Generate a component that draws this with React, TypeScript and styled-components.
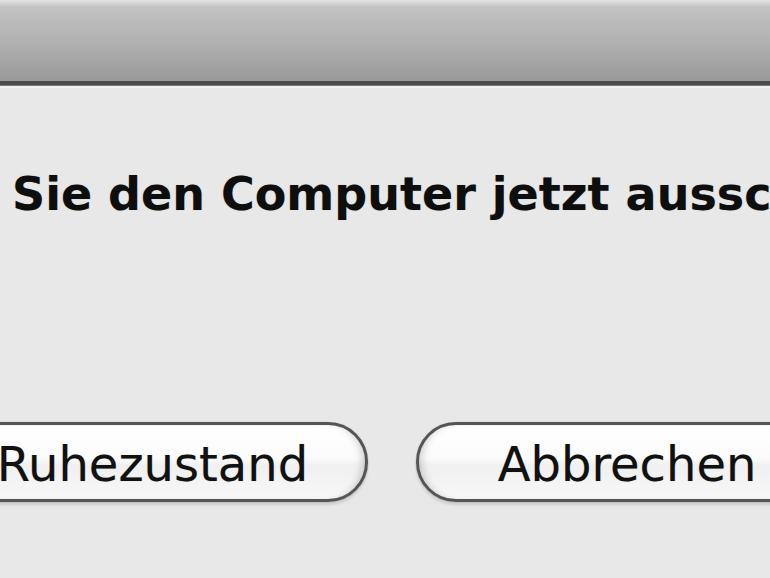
import React from "react";
import styled, { createGlobalStyle } from "styled-components";

const Global = createGlobalStyle`
  html, body { margin: 0; padding: 0; }
  body {
    width: 770px;
    height: 578px;
    overflow: hidden;
    background: #e8e8e8;
    font-family: "DejaVu Sans", "Liberation Sans", sans-serif;
  }
`;

const Window = styled.div`
  width: 770px;
  height: 578px;
  overflow: hidden;
  display: flex;
  flex-direction: column;
  background: #e8e8e8;
`;

const TitleBar = styled.div`
  flex: 0 0 auto;
  height: 81px;
  background: linear-gradient(
    to bottom,
    #e4e4e4 0px,
    #d6d6d6 3px,
    #c2c2c2 7px,
    #b5b5b5 35px,
    #a3a3a3 65px,
    #999999 81px
  );
  border-bottom: 4px solid #4c4c4c;
  box-shadow: 0 1px 0 #7a7a7a, 0 3px 0 #f2f2f2;
`;

const Body = styled.div`
  flex: 1 1 auto;
  display: flex;
  flex-direction: column;
  padding-top: 82px;
  overflow: hidden;
`;

const Message = styled.div`
  font-weight: bold;
  font-size: 46px;
  line-height: 54px;
  color: #0e0e0e;
  white-space: nowrap;
  padding-left: 12px;
  text-shadow: 0 0 1px rgba(0, 0, 0, 0.25);
`;

const ButtonRow = styled.div`
  display: flex;
  gap: 48px;
  margin-top: 201px;
  margin-left: -63px;
`;

const Button = styled.div<{ $width: number }>`
  flex: 0 0 auto;
  box-sizing: border-box;
  width: ${(p) => p.$width}px;
  height: 80px;
  border-radius: 40px;
  border: 3px solid #555555;
  background: linear-gradient(
    to bottom,
    #ffffff 0%,
    #fbfbfb 45%,
    #f0f0f0 55%,
    #f8f8f8 100%
  );
  box-shadow: inset 8px 0 8px -6px rgba(0, 0, 0, 0.2),
    inset -8px 0 8px -6px rgba(0, 0, 0, 0.2),
    0 0 1px rgba(0, 0, 0, 0.4),
    0 3px 3px rgba(0, 0, 0, 0.12);
  display: flex;
  align-items: center;
  justify-content: center;
  font-size: 48px;
  line-height: 1;
  color: #111111;
  white-space: nowrap;
  padding-top: 4px;
  text-shadow: 0 0 1px rgba(0, 0, 0, 0.3);
`;

export default function App() {
  return (
    <>
      <Global />
      <Window>
        <TitleBar />
        <Body>
          <Message>Sie den Computer jetzt ausschalten?</Message>
          <ButtonRow>
            <Button $width={431}>Ruhezustand</Button>
            <Button $width={422}>Abbrechen</Button>
          </ButtonRow>
        </Body>
      </Window>
    </>
  );
}
